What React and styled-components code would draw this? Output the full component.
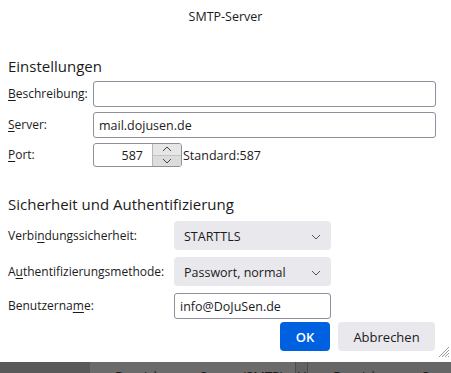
import React from "react";
import styled, { createGlobalStyle } from "styled-components";

const Global = createGlobalStyle`
  html, body {
    margin: 0;
    padding: 0;
    background: #ffffff;
  }
  body {
    font-family: "Open Sans", "Noto Sans", sans-serif;
    font-size: 12px;
    color: #1b1b1b;
  }
`;

const Window = styled.div`
  position: relative;
  width: 451px;
  height: 373px;
  overflow: hidden;
  display: flex;
  flex-direction: column;
  background: #ffffff;
`;

const TitleBar = styled.div`
  height: 32px;
  display: flex;
  align-items: center;
  justify-content: center;
  font-size: 12.5px;
  color: #1b1b1b;
`;

const Body = styled.div`
  flex: 1;
  display: flex;
  flex-direction: column;
  padding: 0 15px 0 8px;
`;

const Heading = styled.div`
  font-size: 15px;
  line-height: 20px;
  margin-top: ${(p) => p.$top}px;
  color: #1b1b1b;
`;

const Grid = styled.div`
  display: grid;
  grid-template-columns: ${(p) => p.$label}px ${(p) => p.$field};
  grid-auto-rows: auto;
  row-gap: ${(p) => p.$gap}px;
  margin-top: ${(p) => p.$top}px;
  align-items: center;
`;

const Label = styled.label`
  white-space: nowrap;
  line-height: 16px;
`;

const Key = styled.span`
  text-decoration: underline;
  text-underline-offset: 2px;
`;

const TextBox = styled.div`
  box-sizing: border-box;
  height: ${(p) => p.$h || 26}px;
  border: 1px solid #8f8f9d;
  border-radius: 3px;
  padding: 0 5px;
  display: flex;
  align-items: center;
  font-size: 12.5px;
  background: #fff;
  white-space: nowrap;
`;

const PortRow = styled.div`
  display: flex;
  align-items: center;
  gap: 1px;
`;

const PortBox = styled.div`
  box-sizing: border-box;
  width: 89px;
  height: 24px;
  border: 1px solid #8f8f9d;
  border-radius: 3px;
  display: flex;
  overflow: hidden;
`;

const PortValue = styled.div`
  flex: 1;
  display: flex;
  align-items: center;
  justify-content: flex-end;
  padding-right: 9px;
  font-size: 12.5px;
`;

const Spinner = styled.div`
  width: 28px;
  display: flex;
  flex-direction: column;
  border-left: 1px solid #b8b8b8;
`;

const SpinBtn = styled.div`
  flex: 1;
  display: flex;
  align-items: center;
  justify-content: center;
  background: ${(p) => (p.$down ? "#dcdcdc" : "#e6e6e6")};
  border-top: ${(p) => (p.$down ? "1px solid #c4c4c4" : "none")};
`;

const Standard = styled.span`
  font-size: 12.5px;
`;

const Select = styled.div`
  box-sizing: border-box;
  height: 29px;
  border-radius: 4px;
  background: #e9e9ed;
  display: flex;
  align-items: center;
  justify-content: space-between;
  padding: 2px 10px 0 10px;
  font-size: 12.5px;
`;

const Buttons = styled.div`
  display: flex;
  justify-content: flex-end;
  gap: 8px;
  margin-top: 3px;
  margin-right: 1px;
`;

const Button = styled.div`
  box-sizing: border-box;
  height: 29px;
  width: ${(p) => p.$w}px;
  border-radius: 4px;
  display: flex;
  align-items: center;
  justify-content: center;
  font-size: 13px;
  font-weight: ${(p) => (p.$primary ? 600 : 400)};
  background: ${(p) => (p.$primary ? "#0061e0" : "#e9e9ed")};
  color: ${(p) => (p.$primary ? "#ffffff" : "#1b1b1b")};
`;

const Grip = styled.svg`
  position: absolute;
  right: 1px;
  bottom: 15px;
`;

const Behind = styled.div`
  height: 11px;
  display: flex;
  background: #5d5d5d;
  box-shadow: inset 0 3px 3px -1px rgba(0, 0, 0, 0.55);
  overflow: hidden;
`;

const Column = styled.div`
  position: relative;
  width: ${(p) => p.$w}px;
  background: ${(p) => p.$bg};
  border-right: ${(p) => (p.$sep ? "1px solid #4c4c4c" : "none")};
  flex: ${(p) => (p.$grow ? 1 : "none")};
`;

const ColText = styled.span`
  position: absolute;
  top: 6px;
  left: ${(p) => p.$x}px;
  font-size: 13px;
  line-height: 16px;
  color: #1a1a1a;
  white-space: nowrap;
`;

const Chevron = ({ up }) => (
  <svg width="10" height="6" viewBox="0 0 10 6">
    <path
      d={up ? "M1 5 L5 1 L9 5" : "M1 1 L5 5 L9 1"}
      fill="none"
      stroke="#444"
      strokeWidth="1"
    />
  </svg>
);

const DropArrow = () => (
  <svg width="10" height="6" viewBox="0 0 10 6">
    <path d="M1 1 L5 5 L9 1" fill="none" stroke="#555" strokeWidth="1" />
  </svg>
);

export default function App() {
  return (
    <Window>
      <Global />
      <TitleBar>SMTP-Server</TitleBar>
      <Body>
        <Heading $top={24}>Einstellungen</Heading>
        <Grid $label={85} $field="1fr" $gap={5} $top={5}>
          <Label>
            <Key>B</Key>eschreibung:
          </Label>
          <TextBox />
          <Label>
            <Key>S</Key>erver:
          </Label>
          <TextBox>mail.dojusen.de</TextBox>
          <Label>
            <Key>P</Key>ort:
          </Label>
          <PortRow>
            <PortBox>
              <PortValue>587</PortValue>
              <Spinner>
                <SpinBtn>
                  <Chevron up />
                </SpinBtn>
                <SpinBtn $down>
                  <Chevron />
                </SpinBtn>
              </Spinner>
            </PortBox>
            <Standard>Standard:587</Standard>
          </PortRow>
        </Grid>

        <Heading $top={27}>Sicherheit und Authentifizierung</Heading>
        <Grid $label={166} $field="157px" $gap={7} $top={7}>
          <Label>
            Verbi<Key>n</Key>dungssicherheit:
          </Label>
          <Select>
            STARTTLS
            <DropArrow />
          </Select>
          <Label>
            A<Key>u</Key>thentifizierungsmethode:
          </Label>
          <Select>
            Passwort, normal
            <DropArrow />
          </Select>
          <Label>
            Benutzerna<Key>m</Key>e:
          </Label>
          <TextBox>info@DoJuSen.de</TextBox>
        </Grid>

        <Buttons>
          <Button $primary $w={50}>
            OK
          </Button>
          <Button $w={97}>Abbrechen</Button>
        </Buttons>
      </Body>

      <Grip width="13" height="13" viewBox="0 0 13 13">
        <path
          d="M12 2 L2 12 M12 5 L5 12 M12 8 L8 12 M12 11 L11 12"
          stroke="#9a9a9a"
          strokeWidth="1"
        />
      </Grip>

      <Behind>
        <Column $w={90} $bg="#595959" />
        <Column $w={205} $bg="#6b6b6b" $sep>
          <ColText $x={25}>Bezeichnung</ColText>
          <ColText $x={110}>Server (SMTP)</ColText>
        </Column>
        <Column $w={11} $bg="#626262" $sep>
          <ColText $x={2}>V</ColText>
        </Column>
        <Column $grow $bg="#666666">
          <ColText $x={25}>Bezeichnung</ColText>
          <ColText $x={114}>Server</ColText>
        </Column>
      </Behind>
    </Window>
  );
}
